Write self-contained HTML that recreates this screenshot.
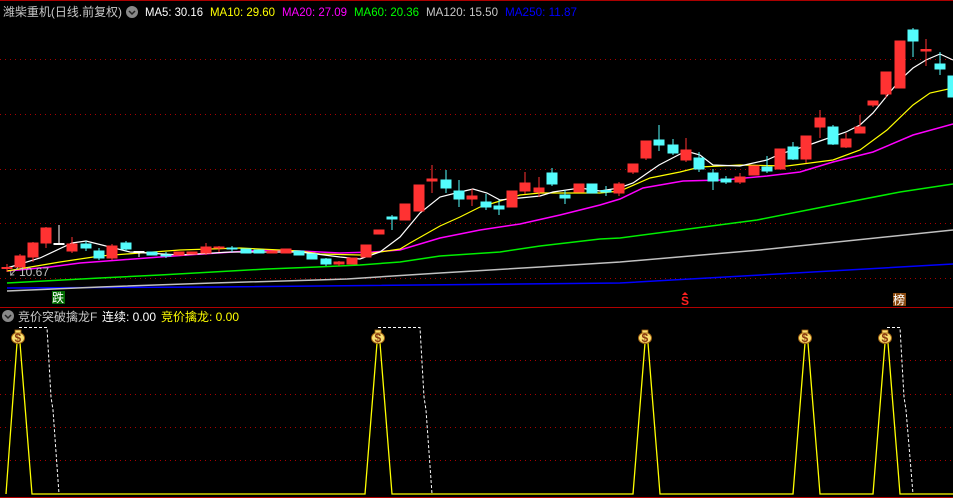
<!DOCTYPE html>
<html><head><meta charset="utf-8"><style>
html,body{margin:0;padding:0;background:#000;width:953px;height:498px;overflow:hidden}
svg{display:block}
text{font-family:"Liberation Sans","Noto Sans CJK SC",sans-serif;font-size:12px}
</style></head><body>
<svg width="953" height="498" viewBox="0 0 953 498" xmlns="http://www.w3.org/2000/svg">
<rect width="953" height="498" fill="#000"/>
<line x1="0" y1="0.5" x2="953" y2="0.5" stroke="#a00" stroke-width="1"/>
<g stroke="#a00" stroke-width="1" stroke-dasharray="1,4">
<line x1="0" y1="59.5" x2="953" y2="59.5"/><line x1="0" y1="114.5" x2="953" y2="114.5"/>
<line x1="0" y1="169.5" x2="953" y2="169.5"/><line x1="0" y1="223.5" x2="953" y2="223.5"/>
<line x1="0" y1="278.5" x2="953" y2="278.5"/>
<line x1="0" y1="360.5" x2="953" y2="360.5"/><line x1="0" y1="394.5" x2="953" y2="394.5"/>
<line x1="0" y1="427.5" x2="953" y2="427.5"/><line x1="0" y1="460.5" x2="953" y2="460.5"/>
</g>
<line x1="0" y1="307.5" x2="953" y2="307.5" stroke="#b00000"/>
<line x1="0" y1="497.5" x2="953" y2="497.5" stroke="#b00000"/>

<polyline fill="none" stroke="#0000ff" stroke-width="1.5" points="7,288 213,287 620,283 953,264"/>
<polyline fill="none" stroke="#c0c0c0" stroke-width="1.5" points="7,291 100,287 213,283 317,280 347,279 440,273 540,267 620,262 760,250 953,230"/>
<polyline fill="none" stroke="#00ee00" stroke-width="1.5" points="7,283 100,278 160,275 213,272 267,269 317,267 360,265 400,262 440,256 500,252 540,246 600,239 620,238 757,220 833,205 900,192 953,184"/>
<polyline fill="none" stroke="#ff00ff" stroke-width="1.5" points="7,271 50,267 80,263 120,260 160,257 187,255 233,252 267,250 300,251 340,253 373,252 400,250 440,238 480,230 520,224 560,215 600,205 620,199 643,188 683,181 723,180 767,176 800,172 833,162 873,152 913,135 953,124"/>
<polyline fill="none" stroke="#ffff00" stroke-width="1.2" points="7,271 60,262 100,256 140,253 180,250 240,248 280,250 300,251 320,254 360,255 380,252 400,249 410,243 440,226 460,217 480,207 500,201 520,195 540,193 600,193 620,191 650,178 680,172 700,167 740,165 787,166 833,160 860,150 887,130 913,105 930,93 953,88"/>
<polyline fill="none" stroke="#ffffff" stroke-width="1.2" points="7,268 40,258 72,243 86,241 130,252 180,255 230,252 300,252 340,257 360,259 380,252 400,237 420,213 440,197 460,192 473,189 487,193 500,200 520,198 540,196 553,192 580,188 600,191 619,188 633,183 659,165 686,151 700,155 713,165 740,166 767,160 780,154 806,146 820,141 846,132 860,125 873,113 886,97 900,80 913,68 926,60 940,54 953,60"/>

<g stroke-width="1">
<g stroke="#ff3232" fill="#ff3232">
<line x1="7" y1="264" x2="7" y2="272"/><rect x="2" y="267.5" width="10" height="1"/>
<line x1="20" y1="254" x2="20" y2="268"/><rect x="15" y="256" width="10" height="11"/>
<line x1="33" y1="242" x2="33" y2="262"/><rect x="28" y="243" width="10" height="14"/>
<line x1="46" y1="227" x2="46" y2="248"/><rect x="41" y="228" width="10" height="15"/>
<line x1="72" y1="237" x2="72" y2="253"/><rect x="67" y="244" width="10" height="7"/>
<line x1="112" y1="244" x2="112" y2="260"/><rect x="107" y="246" width="10" height="12"/>
<rect x="174" y="252" width="10" height="3"/>
<rect x="187" y="252" width="10" height="2"/>
<line x1="206" y1="243" x2="206" y2="255"/><rect x="201" y="247" width="10" height="6"/>
<line x1="219" y1="246" x2="219" y2="252"/><rect x="214" y="247" width="10" height="1"/>
<rect x="267" y="251" width="10" height="2"/>
<rect x="281" y="249" width="10" height="4"/>
<line x1="339" y1="261" x2="339" y2="266"/><rect x="334" y="262" width="10" height="2"/>
<rect x="347" y="258" width="10" height="6"/>
<rect x="361" y="245" width="10" height="12"/>
<rect x="374" y="230" width="10" height="4"/>
<rect x="400" y="204" width="10" height="16"/>
<rect x="414" y="185" width="10" height="26"/>
<line x1="432" y1="165" x2="432" y2="193"/><rect x="427" y="179" width="10" height="2"/>
<line x1="472" y1="189" x2="472" y2="206"/><rect x="467" y="196" width="10" height="3"/>
<rect x="507" y="191" width="10" height="16"/>
<line x1="525" y1="172" x2="525" y2="194"/><rect x="520" y="183" width="10" height="8"/>
<line x1="539" y1="177" x2="539" y2="197"/><rect x="534" y="188" width="10" height="4"/>
<rect x="574" y="184" width="10" height="8"/>
<line x1="619" y1="182" x2="619" y2="196"/><rect x="614" y="184" width="10" height="9"/>
<line x1="633" y1="164" x2="633" y2="174"/><rect x="628" y="164" width="10" height="8"/>
<line x1="646" y1="141" x2="646" y2="160"/><rect x="641" y="141" width="10" height="17"/>
<line x1="686" y1="138" x2="686" y2="162"/><rect x="681" y="150" width="10" height="10"/>
<line x1="740" y1="173" x2="740" y2="184"/><rect x="735" y="177" width="10" height="5"/>
<rect x="749" y="166" width="10" height="9"/>
<rect x="775" y="149" width="10" height="20"/>
<line x1="806" y1="136" x2="806" y2="163"/><rect x="801" y="136" width="10" height="23"/>
<line x1="820" y1="110" x2="820" y2="138"/><rect x="815" y="118" width="10" height="9"/>
<line x1="846" y1="133" x2="846" y2="148"/><rect x="841" y="139" width="10" height="8"/>
<line x1="860" y1="115" x2="860" y2="133"/><rect x="855" y="127" width="10" height="6"/>
<line x1="873" y1="101" x2="873" y2="107"/><rect x="868" y="101" width="10" height="4"/>
<line x1="886" y1="72" x2="886" y2="98"/><rect x="881" y="72" width="10" height="22"/>
<rect x="895" y="41" width="10" height="47"/>
<line x1="926" y1="39" x2="926" y2="66"/><rect x="921" y="49.5" width="10" height="1.5"/>
</g>
<g stroke="#54fcfc" fill="#54fcfc">
<line x1="86" y1="241" x2="86" y2="251"/><rect x="81" y="244" width="10" height="4"/>
<line x1="99" y1="248" x2="99" y2="260"/><rect x="94" y="251" width="10" height="7"/>
<line x1="126" y1="241" x2="126" y2="251"/><rect x="121" y="243" width="10" height="6"/>
<rect x="147" y="252" width="10" height="3"/>
<line x1="166" y1="252" x2="166" y2="258"/><rect x="161" y="255" width="10" height="1"/>
<line x1="232" y1="246" x2="232" y2="252"/><rect x="227" y="248" width="10" height="1"/>
<rect x="241" y="249" width="10" height="4"/>
<rect x="254" y="250" width="10" height="3"/>
<rect x="294" y="251" width="10" height="4"/>
<rect x="307" y="254" width="10" height="5"/>
<line x1="326" y1="258" x2="326" y2="266"/><rect x="321" y="259" width="10" height="5"/>
<line x1="392" y1="215" x2="392" y2="230"/><rect x="387" y="217" width="10" height="2"/>
<line x1="446" y1="170" x2="446" y2="193"/><rect x="441" y="180" width="10" height="8"/>
<line x1="459" y1="180" x2="459" y2="207"/><rect x="454" y="191" width="10" height="8"/>
<line x1="486" y1="194" x2="486" y2="210"/><rect x="481" y="202" width="10" height="5"/>
<line x1="499" y1="200" x2="499" y2="215"/><rect x="494" y="206" width="10" height="3"/>
<line x1="552" y1="168" x2="552" y2="186"/><rect x="547" y="173" width="10" height="11"/>
<line x1="565" y1="190" x2="565" y2="204"/><rect x="560" y="195" width="10" height="3"/>
<rect x="587" y="184" width="10" height="9"/>
<line x1="606" y1="186" x2="606" y2="196"/><rect x="601" y="190.5" width="10" height="1.5"/>
<line x1="659" y1="125" x2="659" y2="151"/><rect x="654" y="140" width="10" height="5"/>
<line x1="673" y1="139" x2="673" y2="155"/><rect x="668" y="145" width="10" height="8"/>
<line x1="699" y1="152" x2="699" y2="172"/><rect x="694" y="158" width="10" height="11"/>
<line x1="713" y1="169" x2="713" y2="190"/><rect x="708" y="173" width="10" height="8"/>
<line x1="726" y1="176" x2="726" y2="184"/><rect x="721" y="179" width="10" height="3"/>
<line x1="767" y1="156" x2="767" y2="173"/><rect x="762" y="167" width="10" height="4"/>
<line x1="793" y1="142" x2="793" y2="160"/><rect x="788" y="147" width="10" height="12"/>
<line x1="833" y1="125" x2="833" y2="145"/><rect x="828" y="127" width="10" height="17"/>
<line x1="913" y1="28" x2="913" y2="57"/><rect x="908" y="30" width="10" height="11"/>
<line x1="940" y1="52" x2="940" y2="75"/><rect x="935" y="64" width="10" height="5"/>
<rect x="948" y="76" width="10" height="21"/>
</g>
<g stroke="#fff" fill="#fff">
<line x1="59" y1="225" x2="59" y2="244"/><rect x="54" y="243.5" width="10" height="1"/>
<line x1="139" y1="252" x2="139" y2="257"/><rect x="134" y="251.5" width="10" height="1"/>
</g>
</g>

<text x="8" y="276" fill="#c0c0c0" font-size="11">↙</text>
<text x="19" y="276" fill="#c0c0c0" font-size="12">10.67</text>
<rect x="52" y="291" width="13" height="13" fill="#006a00"/>
<text x="52" y="302" fill="#fff" font-size="12">跌</text>
<text x="681" y="305" fill="#ff2020" font-size="12" font-weight="bold">S</text>
<path d="M682 295 L685 292 L688 295 Z" fill="#ff2020"/>
<rect x="893" y="293" width="13" height="13" fill="#8a4a10"/>
<text x="893" y="304" fill="#fff" font-size="12">榜</text>

<text x="3" y="16" fill="#c8c8c8" textLength="119" lengthAdjust="spacingAndGlyphs">潍柴重机(日线.前复权)</text>
<circle cx="132" cy="12" r="6" fill="#888"/>
<path d="M129 11 L132 14 L135 11" stroke="#222" stroke-width="1.5" fill="none"/>
<text x="145" y="16" fill="#fff" textLength="58" lengthAdjust="spacingAndGlyphs">MA5: 30.16</text>
<text x="210" y="16" fill="#ffff00" textLength="65" lengthAdjust="spacingAndGlyphs">MA10: 29.60</text>
<text x="282" y="16" fill="#ff00ff" textLength="65" lengthAdjust="spacingAndGlyphs">MA20: 27.09</text>
<text x="354" y="16" fill="#00ff00" textLength="65" lengthAdjust="spacingAndGlyphs">MA60: 20.36</text>
<text x="426" y="16" fill="#c8c8c8" textLength="72" lengthAdjust="spacingAndGlyphs">MA120: 15.50</text>
<text x="505" y="16" fill="#0000ff" textLength="72" lengthAdjust="spacingAndGlyphs">MA250: 11.87</text>

<circle cx="8" cy="316" r="6" fill="#888"/>
<path d="M5 315 L8 318 L11 315" stroke="#222" stroke-width="1.5" fill="none"/>
<text x="18" y="321" fill="#c8c8c8">竞价突破擒龙F</text>
<text x="102" y="321" fill="#fff">连续: 0.00</text>
<text x="161" y="321" fill="#ffff00">竞价擒龙: 0.00</text>

<g fill="none" stroke="#fff" stroke-width="1" stroke-dasharray="3,2">
<polyline points="19,327.5 47,327.5 48,345 51,397 53,410 59,494"/>
<polyline points="378,327.5 420,327.5 421,345 424,397 426,410 432,494"/>
<polyline points="887,327.5 900,327.5 901,345 904,397 906,410 913,494"/>
</g>
<g fill="none" stroke="#ffff00" stroke-width="1.3">
<polyline points="6,494 17,343 20,343 32,494 365,494 377,343 380,343 392,494 633,494 645,343 648,343 660,494 793,494 805,343 808,343 820,494 873,494 885,343 888,343 900,494 953,494"/>
</g>
<g>
<g id="bag">
<ellipse cx="18" cy="338" rx="6.5" ry="5.5" fill="#f8e070" stroke="#a06010" stroke-width="1"/>
<rect x="15" y="330" width="6" height="3" fill="#f8e070" stroke="#a06010" stroke-width="0.8"/>
<text x="14.5" y="342" fill="#8a3a10" font-size="9" font-weight="bold">$</text>
</g>
<use href="#bag" x="360"/><use href="#bag" x="627"/><use href="#bag" x="787"/><use href="#bag" x="867"/>
</g>
</svg>
</body></html>
